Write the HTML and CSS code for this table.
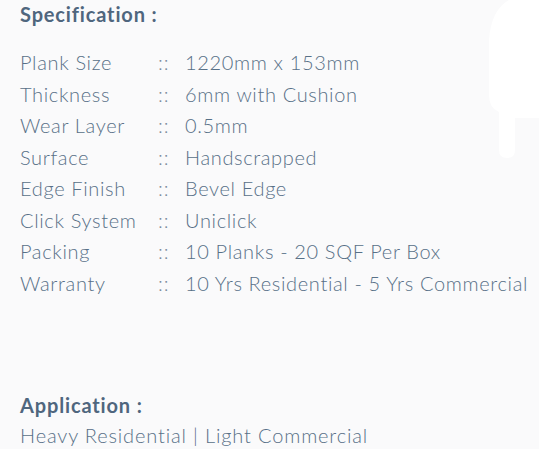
FILE: index.html
```html
<!DOCTYPE html>
<html lang="en">
<head>
<meta charset="utf-8">
<link rel="stylesheet" href="styles.css">
</head>
<body>
<div class="deco" aria-hidden="true">
  <svg width="60" height="170" viewBox="0 0 60 170"><path d="M30 0 H60 V118 H36 V150 Q36 158 28 158 Q20 158 20 150 V112 Q10 108 10 95 V40 Q12 10 30 0 Z" fill="#ffffff"/></svg>
</div>
<main class="page">
  <h2 class="heading">Specification :</h2>
  <div class="spec">
    <span class="k">Plank Size</span><span class="s">::</span><span class="v">1220mm x 153mm</span>
    <span class="k">Thickness</span><span class="s">::</span><span class="v">6mm with Cushion</span>
    <span class="k">Wear Layer</span><span class="s">::</span><span class="v">0.5mm</span>
    <span class="k">Surface</span><span class="s">::</span><span class="v">Handscrapped</span>
    <span class="k">Edge Finish</span><span class="s">::</span><span class="v">Bevel Edge</span>
    <span class="k">Click System</span><span class="s">::</span><span class="v">Uniclick</span>
    <span class="k">Packing</span><span class="s">::</span><span class="v">10 Planks - 20 SQF Per Box</span>
    <span class="k">Warranty</span><span class="s">::</span><span class="v">10 Yrs Residential - 5 Yrs Commercial</span>
  </div>
  <h2 class="heading app">Application :</h2>
  <p class="app-text">Heavy Residential | Light Commercial</p>
</main>
</body>
</html>
```
FILE: styles.css
```css
html, body {
  margin: 0;
  padding: 0;
  background: #fafafb;
}
body {
  font-family: Lato, "Noto Sans", sans-serif;
  color: #587087;
  width: 539px;
  height: 449px;
  overflow: hidden;
  position: relative;
}
.deco {
  position: absolute;
  right: 0;
  top: 0;
  width: 60px;
  height: 170px;
}
.page {
  padding: 2px 0 0 20px;
  position: relative;
}
.heading {
  margin: 0;
  font-size: 20px;
  font-weight: 700;
  letter-spacing: 0.85px;
  color: #4f667e;
  line-height: 24px;
}
.spec {
  margin-top: 21px;
  display: grid;
  grid-template-columns: 138px 27px auto;
  grid-auto-rows: 31.5px;
  font-size: 20px;
  font-weight: 300;
  letter-spacing: 0.65px;
  line-height: 31.5px;
}
.s {
  color: #7a8b9c;
  letter-spacing: 1px;
}
.app {
  margin-top: 94px;
}
.app-text {
  margin: 5px 0 0;
  font-size: 20px;
  font-weight: 300;
  letter-spacing: 0.85px;
  line-height: 26px;
}
```
